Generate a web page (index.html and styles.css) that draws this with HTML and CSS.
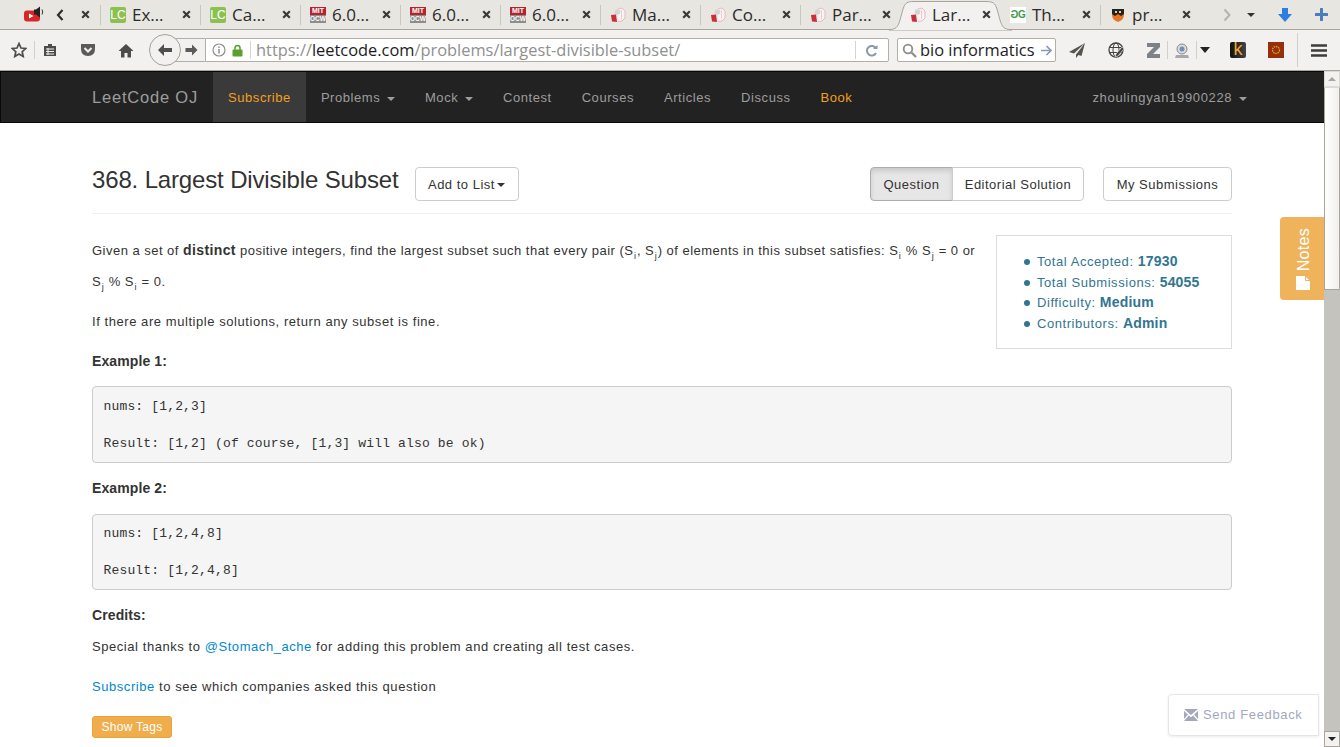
FILE: index.html
```html
<!DOCTYPE html>
<html lang="en">
<head>
    <meta charset="UTF-8">
    <title>Largest Divisible Subset - LeetCode</title>
    <link rel="stylesheet" href="styles.css">
</head>
<body>
    <svg class="defs" width="0" height="0">
        <symbol id="x" viewBox="0 0 9 9"><path d="M1.200 1.200l6.600 6.600M7.800 1.200L1.200 7.800" stroke="#3a3a38" stroke-width="2.200" fill="none"/></symbol>
        <symbol id="hand" viewBox="0 0 16 16">
            <path d="M8 2l4-1 3 3v7l-3 3-4 .5" fill="#faf3f3" stroke="#eab9c0" stroke-width="1"/>
            <path d="M11.500 3v9" stroke="#eccdd1" stroke-width="1"/>
            <circle cx="7.500" cy="5" r="2.800" fill="#d6d4d2"/>
            <path d="M1 8l5-.5 1 7.500-5-.5z" fill="#c9303c"/>
        </symbol>
    </svg>

    <div class="tabbar">
        <div class="pinned">
            <svg class="yt" width="22" height="17" viewBox="0 0 22 17">
                <rect x="0" y="4.500" width="16" height="11" rx="3" fill="#d9252a"/>
                <path d="M5 7.500l4.500 2.500L5 12.500z" fill="#fff"/>
                <path d="M10 3.500h2l4-3v11l-4-3h-2z" fill="#222"/>
                <path d="M18 3.500q1.500 2.500 0 5" stroke="#333" fill="none"/>
            </svg>
            <svg class="chev" width="8" height="12" viewBox="0 0 8 12"><path d="M6.500 1L2 6l4.500 5" stroke="#2e2e2c" stroke-width="2.200" fill="none"/></svg>
            <svg class="close pin-close"><use href="#x"/></svg>
        </div>
        <div class="tab"><span class="fav lc">LC</span><span class="tab-title">Ex…</span><svg class="close"><use href="#x"/></svg></div>
        <div class="tab"><span class="fav lc">LC</span><span class="tab-title">Ca…</span><svg class="close"><use href="#x"/></svg></div>
        <div class="tab"><span class="fav mit"><b>MIT</b><i>OCW</i></span><span class="tab-title">6.0…</span><svg class="close"><use href="#x"/></svg></div>
        <div class="tab"><span class="fav mit"><b>MIT</b><i>OCW</i></span><span class="tab-title">6.0…</span><svg class="close"><use href="#x"/></svg></div>
        <div class="tab"><span class="fav mit"><b>MIT</b><i>OCW</i></span><span class="tab-title">6.0…</span><svg class="close"><use href="#x"/></svg></div>
        <div class="tab"><svg class="fav"><use href="#hand"/></svg><span class="tab-title">Ma…</span><svg class="close"><use href="#x"/></svg></div>
        <div class="tab"><svg class="fav"><use href="#hand"/></svg><span class="tab-title">Co…</span><svg class="close"><use href="#x"/></svg></div>
        <div class="tab"><svg class="fav"><use href="#hand"/></svg><span class="tab-title">Par…</span><svg class="close"><use href="#x"/></svg></div>
        <div class="tab active">
            <svg class="tab-shape" width="124" height="31" viewBox="0 0 124 31"><path d="M0 29.500C7 29.500 9 27 11 20L14 9C16 3 18 1.500 25 1.500H97C104 1.500 106 3 108 9L111 20C113 27 115 29.500 122 29.500V31H0z" fill="#f2f1ef" stroke="#a9a49b"/></svg>
            <svg class="fav"><use href="#hand"/></svg><span class="tab-title">Lar…</span><svg class="close"><use href="#x"/></svg>
        </div>
        <div class="tab no-sep"><span class="fav gfg"><em>G</em>G</span><span class="tab-title">Th…</span><svg class="close"><use href="#x"/></svg></div>
        <div class="tab">
            <svg class="fav" viewBox="0 0 16 16"><path d="M2 2h12v6q0 5-6 7-6-2-6-7z" fill="#e8751f"/><path d="M2 2h12v5l-3 2-3-2-3 2-3-2z" fill="#222"/><path d="M5 4h2v2H5zM9 4h2v2H9z" fill="#e8c9a8"/></svg>
            <span class="tab-title">pr…</span><svg class="close"><use href="#x"/></svg>
        </div>
        <div class="tab-tools">
            <svg class="more" width="8" height="14" viewBox="0 0 8 14"><path d="M1.500 1.500L6.500 7l-5 5.500" stroke="#b5b3ae" stroke-width="2" fill="none"/></svg>
            <span class="caret-small"></span>
            <svg class="dl" width="16" height="16" viewBox="0 0 16 16"><path d="M5 1h6v6h4l-7 8-7-8h4z" fill="#2c7fdc"/></svg>
            <svg class="newtab" width="13" height="13" viewBox="0 0 13 13"><path d="M6.500 1v11M1 6.500h11" stroke="#4a7cc0" stroke-width="3" stroke-linecap="round"/></svg>
        </div>
    </div>

    <div class="toolbar">
        <svg class="star" width="16" height="16" viewBox="0 0 16 16"><path d="M8 1.500l2 4.500 4.800.5-3.600 3.200 1 4.800L8 12.100l-4.200 2.400 1-4.800L1.200 6.500 6 6z" fill="none" stroke="#4c4c4a" stroke-width="1.700"/></svg>
        <span class="tb-sep sep-a"></span>
        <svg class="reader" width="14" height="14" viewBox="0 0 14 14"><path d="M1 3h12v10H1z" fill="#4c4c4a"/><path d="M5 1h4v3H5z" fill="#4c4c4a"/><path d="M3 6h8M3 8.500h8M3 11h8M5 5v7" stroke="#f2f1ef"/></svg>
        <svg class="pocket" width="16" height="14" viewBox="0 0 16 14"><path d="M1 1h14v5q0 7-7 7T1 6z" fill="#5a5a58"/><path d="M4.500 5L8 8.500 11.500 5" stroke="#f2f1ef" stroke-width="2" fill="none"/></svg>
        <svg class="home" width="16" height="15" viewBox="0 0 16 15"><path d="M8 1L0.500 8h2.500v6.500h3.500V10h3v4.500H13V8h2.500z" fill="#4c4c4a"/></svg>
        <div class="nav-btns">
            <span class="back"><svg width="16" height="14" viewBox="0 0 16 14"><path d="M7 1L1 7l6 6V9h8V5H7z" fill="#4f4f4d"/></svg></span>
            <span class="forward"><svg width="13" height="12" viewBox="0 0 13 12"><path d="M7 .5L12.500 6 7 11.500V8H.5V4H7z" fill="#5b5b59"/></svg></span>
        </div>
        <div class="urlbar">
            <svg class="info" width="14" height="14" viewBox="0 0 14 14"><circle cx="7" cy="7" r="6" fill="none" stroke="#8d8d8b" stroke-width="1.200"/><path d="M7 6v4.500M7 3.500v1.500" stroke="#8d8d8b" stroke-width="1.500"/></svg>
            <svg class="lock" width="11" height="13" viewBox="0 0 11 13"><path d="M3 6V4a2.500 2.500 0 0 1 5 0v2" fill="none" stroke="#5aa02c" stroke-width="1.500"/><rect x=".5" y="5.500" width="10" height="7" rx="1" fill="#5aa02c"/></svg>
            <span class="url-sep"></span>
            <span class="url"><span class="url-dim">https://</span>leetcode.com<span class="url-dim">/problems/largest-divisible-subset/</span></span>
            <span class="url-sep reload-sep"></span>
            <svg class="reload" width="13" height="13" viewBox="0 0 13 13"><path d="M11 4.500A4.800 4.800 0 1 0 11 9" fill="none" stroke="#8a97a5" stroke-width="2"/><path d="M8 5h4.500V1z" fill="#8a97a5"/></svg>
        </div>
        <div class="searchbar">
            <svg width="15" height="15" viewBox="0 0 15 15"><circle cx="6" cy="6" r="4.300" fill="none" stroke="#8d8d8b" stroke-width="1.800"/><path d="M9.500 9.500l4.500 4.500" stroke="#8d8d8b" stroke-width="2.200"/></svg>
            <span class="search-text">bio informatics</span>
            <svg class="go" width="11" height="11" viewBox="0 0 11 11"><path d="M5.500 1L10 5.500 5.500 10M10 5.500H0" fill="none" stroke="#8a9bb0" stroke-width="1.700"/></svg>
        </div>
        <svg class="ext plane" width="16" height="15" viewBox="0 0 16 15"><path d="M16 0L0 9l5 1.500L16 0 7 11.500V15l2.500-3 3 1z" fill="#55554f"/></svg>
        <svg class="ext globe" width="16" height="16" viewBox="0 0 16 16"><circle cx="8" cy="8" r="7" fill="none" stroke="#444" stroke-width="1.300"/><ellipse cx="8" cy="8" rx="3" ry="7" fill="none" stroke="#444"/><path d="M1 5.500h14M1 10.500h14" stroke="#444"/><path d="M8 12l6-7 2 2-6 7-3 1z" fill="#444" stroke="#f2f1ef" stroke-width=".6"/></svg>
        <svg class="ext zed" width="13" height="15" viewBox="0 0 13 15"><path d="M0 0h13v4L6 11h7v4H0v-4l7-7H0z" fill="#7c8288"/></svg>
        <span class="tb-sep sep-b"></span>
        <svg class="ext cam" width="14" height="15" viewBox="0 0 14 15"><circle cx="7" cy="6" r="5" fill="#dcdcdc" stroke="#8a8a8a"/><circle cx="7" cy="6" r="2.500" fill="#6d8fb8"/><path d="M1 12h12l1 3H0z" fill="#a8a8a8"/></svg>
        <span class="tb-sep sep-c"></span>
        <span class="caret-dark"></span>
        <span class="ext-k">k</span>
        <svg class="ext sun" width="16" height="16" viewBox="0 0 16 16"><rect width="16" height="16" fill="#96300c"/><circle cx="8" cy="8" r="3.500" fill="none" stroke="#e0a030" stroke-width="1.300" stroke-dasharray="1.500 .8"/></svg>
        <span class="tb-sep sep-d"></span>
        <svg class="ext burger" width="16" height="13" viewBox="0 0 16 13"><path d="M0 1.500h16M0 6.500h16M0 11.500h16" stroke="#3c3c3a" stroke-width="2.300"/></svg>
    </div>

    <div class="viewport">
        <div class="page">
            <nav class="navbar">
                <div class="container nav-inner">
                    <a class="brand">LeetCode OJ</a>
                    <a class="nav-item nav-active orange">Subscribe</a>
                    <a class="nav-item">Problems <span class="caret"></span></a>
                    <a class="nav-item">Mock <span class="caret"></span></a>
                    <a class="nav-item">Contest</a>
                    <a class="nav-item">Courses</a>
                    <a class="nav-item">Articles</a>
                    <a class="nav-item">Discuss</a>
                    <a class="nav-item orange">Book</a>
                    <a class="nav-item nav-user">zhoulingyan19900228 <span class="caret"></span></a>
                </div>
            </nav>

            <div class="container main">
                <div class="question-head">
                    <h3 class="question-title">368. Largest Divisible Subset</h3>
                    <button class="btn add-list">Add to List <span class="caret caret-btn"></span></button>
                    <div class="btn-group">
                        <button class="btn btn-active">Question</button>
                        <button class="btn btn-editorial">Editorial Solution</button>
                    </div>
                    <button class="btn my-subs">My Submissions</button>
                </div>

                <div class="stats">
                    <ul>
                        <li>Total Accepted: <strong>17930</strong></li>
                        <li>Total Submissions: <strong>54055</strong></li>
                        <li>Difficulty: <strong>Medium</strong></li>
                        <li>Contributors: <strong>Admin</strong></li>
                    </ul>
                </div>

                <div class="question-body">
                    <p class="intro">Given a set of <b>distinct</b> positive integers, find the largest subset such that every pair (S<sub>i</sub>, S<sub>j</sub>) of elements in this subset satisfies: S<sub>i</sub> % S<sub>j</sub> = 0 or S<sub>j</sub> % S<sub>i</sub> = 0.</p>
                    <p class="fine">If there are multiple solutions, return any subset is fine.</p>
                    <p class="label"><b>Example 1:</b></p>
<pre>nums: [1,2,3]

Result: [1,2] (of course, [1,3] will also be ok)</pre>
                    <p class="label label-2"><b>Example 2:</b></p>
<pre class="pre-2">nums: [1,2,4,8]

Result: [1,2,4,8]</pre>
                    <p class="label label-2"><b>Credits:</b></p>
                    <p class="thanks">Special thanks to <a>@Stomach_ache</a> for adding this problem and creating all test cases.</p>
                    <p class="label"><a>Subscribe</a> to see which companies asked this question</p>
                    <button class="show-tags">Show Tags</button>
                </div>
            </div>

            <div class="notes-tab">
                <span class="notes-text">Notes</span>
                <svg width="14" height="14" viewBox="0 0 14 14"><path d="M0 0h9l5 5v9H0z" fill="#fff"/><path d="M9.500 0v4.500H14" fill="none" stroke="#efb35c"/></svg>
            </div>

            <div class="feedback">
                <svg width="14" height="12" viewBox="0 0 14 12"><path d="M0 0h14L7 6zM0 2l4 3.500L0 10zM14 2v8l-4-4.500zM0 12l4.800-5.500L7 8.300l2.200-1.800L14 12z" fill="#a3a8bd"/></svg>
                <span>Send Feedback</span>
            </div>
        </div>

        <div class="scrollbar">
            <span class="arrow-btn"><i class="tri-up"></i></span>
            <span class="thumb"></span>
            <span class="track"></span>
            <span class="arrow-btn arrow-down"><i class="tri-down"></i></span>
        </div>
    </div>
</body>
</html>
```

FILE: styles.css
```css
* {
    box-sizing: border-box;
}
html, body {
    margin: 0;
    height: 747px;
    overflow: hidden;
}
body {
    display: flex;
    flex-direction: column;
    font-family: "Liberation Sans", Arial, sans-serif;
    font-size: 13px;
    color: #333;
    background: #f2f1ef;
}
.defs {
    position: absolute;
}

/* tabs */
.tabbar {
    height: 30px;
    flex: none;
    display: flex;
    background: #e8e6e1;
    border-bottom: 1px solid #aaa59b;
    font-family: "Open Sans", sans-serif;
}
.pinned {
    width: 100px;
    display: flex;
    align-items: center;
    padding-left: 24px;
}
.yt {
    flex: none;
}
.chev {
    margin-left: 10px;
}
.pin-close {
    margin-left: 17px;
}
.close {
    width: 9px;
    height: 9px;
    flex: none;
}
.tab {
    width: 100px;
    height: 29px;
    position: relative;
    display: flex;
    align-items: center;
    padding-left: 10px;
    font-size: 17px;
    color: #2b2b2b;
}
.tab::before {
    content: "";
    position: absolute;
    left: 0;
    top: 5px;
    height: 20px;
    width: 1px;
    background: #c8c5bf;
}
.tab.active::before,
.tab.no-sep::before {
    display: none;
}
.fav {
    width: 16px;
    height: 16px;
    flex: none;
    position: relative;
}
.tab-title {
    margin-left: 6px;
    width: 50px;
    white-space: nowrap;
    position: relative;
}
.tab .close {
    position: relative;
}
.tab-shape {
    position: absolute;
    left: -11px;
    top: 0;
}
.lc {
    background: #8cc152;
    border-radius: 2px;
    color: #fff;
    font-size: 12px;
    line-height: 16px;
    text-align: center;
    font-family: "Liberation Sans", sans-serif;
}
.mit {
    display: flex;
    flex-direction: column;
    font-family: "Liberation Sans", sans-serif;
    text-align: center;
}
.mit b {
    height: 8px;
    background: #b5242c;
    color: #fff;
    font-size: 7px;
    line-height: 8px;
}
.mit i {
    height: 8px;
    background: #8d8d8b;
    color: #fff;
    font-size: 6.500px;
    font-style: normal;
    font-weight: bold;
    line-height: 8px;
}
.gfg {
    background: #fff;
    color: #3f9a4a;
    font-size: 10px;
    font-weight: bold;
    line-height: 16px;
    text-align: center;
    letter-spacing: -0.500px;
    font-family: "Liberation Sans", sans-serif;
}
.gfg em {
    display: inline-block;
    font-style: normal;
    transform: scaleX(-1);
}
.tab-tools {
    flex: 1;
    display: flex;
    align-items: center;
    height: 29px;
}
.more {
    margin-left: 23px;
}
.caret-small {
    margin-left: 16px;
    border-top: 4px solid #333;
    border-left: 4px solid transparent;
    border-right: 4px solid transparent;
}
.dl {
    margin-left: 22px;
}
.newtab {
    margin-left: 22px;
}

/* toolbar */
.toolbar {
    height: 41px;
    flex: none;
    display: flex;
    align-items: center;
    padding-left: 11px;
    background: #f2f1ef;
    border-bottom: 1px solid #a9a59c;
    font-family: "Open Sans", sans-serif;
}
.toolbar svg {
    flex: none;
}
.tb-sep {
    width: 1px;
    height: 24px;
    background: #d2d0cb;
    flex: none;
}
.sep-a { margin-left: 7px; height: 18px; }
.reader { margin-left: 8px; }
.pocket { margin-left: 23px; }
.home { margin-left: 22px; }
.nav-btns {
    margin-left: 15px;
    display: flex;
    align-items: center;
}
.back {
    width: 32px;
    height: 32px;
    border-radius: 50%;
    border: 1px solid #a89f94;
    background: #f2f1ef;
    display: flex;
    align-items: center;
    justify-content: center;
    position: relative;
}
.forward {
    width: 35px;
    height: 24px;
    margin-left: -11px;
    padding-left: 15px;
    border-top: 1px solid #b4aea4;
    border-bottom: 1px solid #b4aea4;
    display: flex;
    align-items: center;
}
.urlbar {
    width: 684px;
    height: 24px;
    display: flex;
    align-items: center;
    padding-left: 6px;
    background: #fff;
    border: 1px solid #b4aea4;
    border-radius: 0 2px 2px 0;
}
.lock { margin-left: 6px; }
.url-sep {
    width: 1px;
    height: 18px;
    background: #d6d4d0;
    margin-left: 7px;
    flex: none;
}
.url {
    margin-left: 5px;
    width: 599px;
    padding-bottom: 2px;
    font-size: 16.400px;
    color: #1c1c1c;
    white-space: nowrap;
}
.url-dim {
    color: #8f8f8f;
}
.reload-sep {
    margin-left: 0;
}
.reload {
    margin-left: 9px;
}
.searchbar {
    width: 159px;
    height: 24px;
    margin-left: 8px;
    display: flex;
    align-items: center;
    padding-left: 4px;
    background: #fff;
    border: 1px solid #b4aea4;
    border-radius: 2px;
}
.search-text {
    margin-left: 3px;
    width: 121px;
    padding-bottom: 2px;
    font-size: 16.400px;
    color: #222;
    white-space: nowrap;
}
.plane { margin-left: 13px; }
.globe { margin-left: 23px; }
.zed { margin-left: 23px; }
.sep-b { margin-left: 7px; height: 18px; }
.cam { margin-left: 7px; }
.sep-c { margin-left: 7px; height: 18px; }
.caret-dark {
    margin-left: 3px;
    border-top: 6px solid #222;
    border-left: 5px solid transparent;
    border-right: 5px solid transparent;
}
.ext-k {
    margin-left: 20px;
    width: 16px;
    height: 16px;
    flex: none;
    border-radius: 2px;
    background: linear-gradient(to right, #111, #444);
    color: #f0a830;
    font: 18px/15px "Liberation Sans", sans-serif;
    text-align: center;
}
.sun { margin-left: 22px; }
.sep-d { margin-left: 13px; height: 34px; }
.burger { margin-left: 13px; }

/* page */
.viewport {
    height: 676px;
    flex: none;
    display: flex;
}
.page {
    width: 1324px;
    flex: none;
    position: relative;
    overflow: hidden;
    background: #fff;
    font-size: 13px;
    letter-spacing: 0.560px;
    line-height: 20px;
}
.container {
    width: 1170px;
    margin: 0 auto;
    padding: 0 15px;
}
.navbar {
    height: 52px;
    background: #222;
    border: 1px solid #080808;
    border-right: 0;
}
.nav-inner {
    display: flex;
    height: 50px;
    position: relative;
    left: -0.500px;
}
.brand {
    font-size: 16.500px;
    letter-spacing: 0.800px;
    line-height: 50px;
    color: #9d9d9d;
    margin-right: 15px;
}
.nav-item {
    padding: 0 15px;
    line-height: 51px;
    color: #9d9d9d;
}
.nav-active {
    background: #3a3a3a;
}
.orange {
    color: #f0a020;
}
.nav-user {
    margin-left: auto;
    margin-right: -30px;
    letter-spacing: 0.660px;
}
.caret {
    display: inline-block;
    width: 0;
    height: 0;
    margin-left: 2.500px;
    vertical-align: middle;
    border-top: 4px solid;
    border-left: 4px solid transparent;
    border-right: 4px solid transparent;
}
.caret-btn {
    margin-left: -2px;
}
.main {
    padding-top: 44px;
}
.question-head {
    display: flex;
    align-items: flex-start;
    padding-bottom: 12px;
    border-bottom: 1px solid #eee;
    margin-bottom: 21px;
}
.question-title {
    margin: 0 16px 0 0;
    font-size: 24px;
    font-weight: 400;
    line-height: 26px;
    letter-spacing: -0.150px;
}
.btn {
    height: 34px;
    padding: 0;
    background: #fff;
    border: 1px solid #ccc;
    border-radius: 4px;
    color: #333;
    font: 13px "Liberation Sans", sans-serif;
    letter-spacing: 0.500px;
    white-space: nowrap;
}
.add-list {
    width: 104px;
}
.btn-group {
    display: flex;
    margin-left: auto;
}
.btn-group .btn:first-child {
    border-radius: 4px 0 0 4px;
}
.btn-group .btn:last-child {
    border-radius: 0 4px 4px 0;
    margin-left: -1px;
}
.btn-active {
    width: 83px;
    background: #e6e6e6;
    border-color: #adadad;
    box-shadow: inset 0 3px 5px rgba(0, 0, 0, .125);
}
.btn-editorial {
    width: 132px;
}
.my-subs {
    width: 129px;
    margin-left: 19px;
}
.stats {
    float: right;
    width: 236px;
    height: 114px;
    margin-left: 18px;
    border: 1px solid #ddd;
    color: #337591;
}
.stats ul {
    margin: 16px 0 0;
    padding-left: 27px;
    line-height: 20.650px;
    list-style: none;
}
.stats li::before {
    content: "";
    display: inline-block;
    width: 6px;
    height: 6px;
    margin: 0 7px 1px 0;
    border-radius: 50%;
    background: #337591;
    vertical-align: middle;
}
.stats strong {
    font-size: 14px;
    letter-spacing: 0.200px;
    line-height: 1;
}
.question-body p {
    margin: 0;
}
.question-body b {
    font-size: 14px;
    letter-spacing: 0.100px;
    line-height: 1;
}
.question-body .intro {
    line-height: 31px;
    letter-spacing: 0.475px;
}
.question-body .intro b {
    letter-spacing: 0.400px;
}
.question-body sub {
    margin: 0 0.500px;
    font-size: 9px;
    line-height: 0;
}
.question-body .fine {
    margin-top: 15px;
}
.question-body .label {
    margin-top: 20px;
}
.question-body .label-2 {
    margin-top: 16px;
}
.question-body .thanks {
    margin-top: 11px;
}
.question-body a {
    color: #0088cc;
}
pre {
    margin: 14px 0 0;
    padding: 10.500px 10.500px 8.500px;
    height: 76.500px;
    background: #f5f5f5;
    border: 1px solid #ccc;
    border-radius: 4px;
    font: 13px/18.570px "Liberation Mono", monospace;
    letter-spacing: 0.160px;
    color: #333;
}
pre.pre-2 {
    margin-top: 15px;
}
.show-tags {
    display: block;
    margin-top: 19px;
    width: 80px;
    height: 22px;
    padding: 0;
    background: #f0ad4e;
    border: 1px solid #eea236;
    border-radius: 3px;
    color: #fff;
    font: 12px "Liberation Sans", sans-serif;
    letter-spacing: 0.300px;
}
.notes-tab {
    position: absolute;
    right: 0;
    top: 146px;
    width: 44px;
    height: 83px;
    padding-top: 11px;
    background: #efb35c;
    border-radius: 4px 0 0 4px;
    display: flex;
    flex-direction: column;
    align-items: center;
    gap: 5px;
    color: #fff;
}
.notes-text {
    margin-left: 3px;
    writing-mode: vertical-rl;
    transform: rotate(180deg);
    font-size: 16px;
    letter-spacing: 0.300px;
    line-height: 16px;
}
.notes-tab svg {
    margin-left: 1px;
}
.feedback {
    position: absolute;
    right: 5px;
    bottom: 11px;
    width: 151px;
    height: 42px;
    display: flex;
    align-items: center;
    gap: 5px;
    padding-left: 15px;
    background: #fff;
    border: 1px solid #e5e5e5;
    border-radius: 4px 0 0 4px;
    box-shadow: 0 1px 3px rgba(0, 0, 0, .08);
    color: #a3a8bd;
    letter-spacing: 0.650px;
}

/* scrollbar */
.scrollbar {
    width: 16px;
    flex: none;
    display: flex;
    flex-direction: column;
    background: #c4c3bd;
}
.arrow-btn {
    height: 16px;
    flex: none;
    display: flex;
    align-items: center;
    justify-content: center;
    background: #f3f2f0;
    border: 1px solid #dcdad5;
}
.arrow-down {
    border-color: #a9a59c;
}
.tri-up {
    border-bottom: 4px solid #a9a59c;
    border-left: 4px solid transparent;
    border-right: 4px solid transparent;
}
.tri-down {
    border-top: 4px solid #222;
    border-left: 4px solid transparent;
    border-right: 4px solid transparent;
}
.thumb {
    height: 203px;
    flex: none;
    background: linear-gradient(to right, #fff, #f2f0ec);
    border: 1px solid #a9a59c;
    border-top-color: #dcdad5;
}
.track {
    flex: 1;
}
```
